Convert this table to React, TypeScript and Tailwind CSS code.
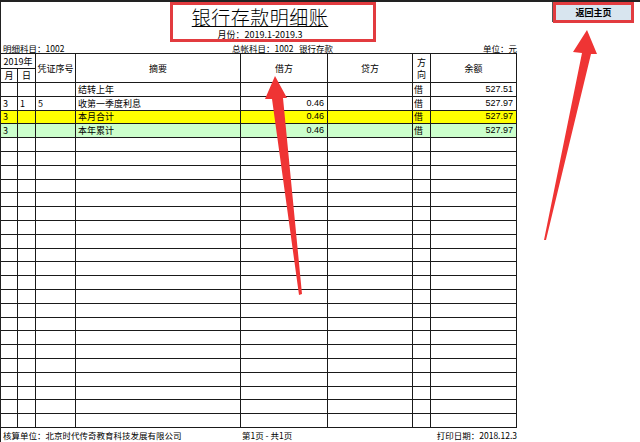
import React from 'react';

const cols = 'grid grid-cols-[17px_18px_40px_165px_87px_85px_18px_86px]';
const cjk = { fontFamily: '"Noto Sans CJK SC", "Liberation Sans", sans-serif' };

interface Row {
  m?: string;
  d?: string;
  no?: string;
  memo?: string;
  debit?: string;
  credit?: string;
  dir?: string;
  balance?: string;
  bg?: string;
}

const rows: Row[] = [
  { memo: '结转上年', dir: '借', balance: '527.51' },
  { m: '3', d: '1', no: '5', memo: '收第一季度利息', debit: '0.46', dir: '借', balance: '527.97' },
  { m: '3', memo: '本月合计', debit: '0.46', dir: '借', balance: '527.97', bg: 'bg-[#ffff00]' },
  { m: '3', memo: '本年累计', debit: '0.46', dir: '借', balance: '527.97', bg: 'bg-[#ccffcc]' },
];

while (rows.length < 25) rows.push({});

function Cell({ children, className = '' }: { children?: React.ReactNode; className?: string }) {
  return (
    <div className={`border-r border-b border-[#1a1a1a] flex items-center overflow-hidden whitespace-nowrap ${className}`}>
      {children}
    </div>
  );
}

export default function App() {
  return (
    <div
      className="relative w-[640px] h-[442px] bg-white border-t-2 border-l border-[#222] overflow-hidden text-black text-[8.5px] leading-none"
      style={cjk}
    >
      {/* title area */}
      <div className="flex h-[41px]">
        <div className="ml-[169px] w-[206px] h-[40px] border-[3px] border-[#e23b3f] flex flex-col items-center pr-[26px]">
          <div className="text-[19px] leading-[19px] font-light underline underline-offset-[1px] mt-[2px] tracking-[0.5px]">银行存款明细账</div>
          <div className="text-[9px] leading-[9px] mt-[4px]">月份：2019.1-2019.3</div>
        </div>
        <div className="ml-auto mr-[6px] w-[81px] h-[21px] border-[3px] border-[#e23b3f] bg-[#d8e5ef] shadow-[-1px_-1px_0_#555] flex items-center justify-center font-bold text-[9px]">
          返回主页
        </div>
      </div>

      {/* info row */}
      <div className="flex items-center h-[10px] w-[516px]">
        <div className="pl-[2px] w-[231px]">明细科目：1002</div>
        <div>总帐科目：1002&nbsp;&nbsp;&nbsp;银行存款</div>
        <div className="ml-auto">单位：元</div>
      </div>

      {/* table */}
      <div className="w-[516px] border-t border-[#1a1a1a] text-[9px]">
        <div className={`${cols} grid-rows-[15px_14px]`}>
          <Cell className="col-span-2 justify-center">2019年</Cell>
          <Cell className="row-span-2 justify-center">凭证序号</Cell>
          <Cell className="row-span-2 justify-center">摘要</Cell>
          <Cell className="row-span-2 justify-center">借方</Cell>
          <Cell className="row-span-2 justify-center">贷方</Cell>
          <Cell className="row-span-2 flex-col justify-center gap-[3px]">
            <span>方</span>
            <span>向</span>
          </Cell>
          <Cell className="row-span-2 justify-center">余额</Cell>
          <Cell className="justify-center">月</Cell>
          <Cell className="justify-center">日</Cell>
        </div>
        {rows.map((r, i) => (
          <div key={i} className={`${cols} h-[13.8px] ${r.bg ?? ''}`}>
            <Cell className="pl-[2px]">{r.m}</Cell>
            <Cell className="pl-[2px]">{r.d}</Cell>
            <Cell className="pl-[2px]">{r.no}</Cell>
            <Cell className="pl-[2px]">{r.memo}</Cell>
            <Cell className="justify-end pr-[3px] font-['Liberation_Sans']">{r.debit}</Cell>
            <Cell className="justify-end pr-[3px]">{r.credit}</Cell>
            <Cell className="pl-[1px]">{r.dir}</Cell>
            <Cell className="justify-end pr-[3px] font-['Liberation_Sans']">{r.balance}</Cell>
          </div>
        ))}
      </div>

      {/* footer */}
      <div className="flex items-center h-[14px] w-[516px]">
        <div className="pl-[2px] w-[241px]">核算单位：北京时代传奇教育科技发展有限公司</div>
        <div>第1页 - 共1页</div>
        <div className="ml-auto">打印日期：2018.12.3</div>
      </div>

      {/* annotation arrows */}
      <svg className="absolute top-[-2px] left-[-1px] pointer-events-none" width="640" height="442" viewBox="0 0 640 442">
        <polygon points="275,76 287,98 283,98 302,294 299,295 272,99 265,99" fill="#ef3434" />
        <polygon points="587,30 597,54 591,54 546,240 544,240 582,53 573,52" fill="#ef3434" />
      </svg>
    </div>
  );
}
